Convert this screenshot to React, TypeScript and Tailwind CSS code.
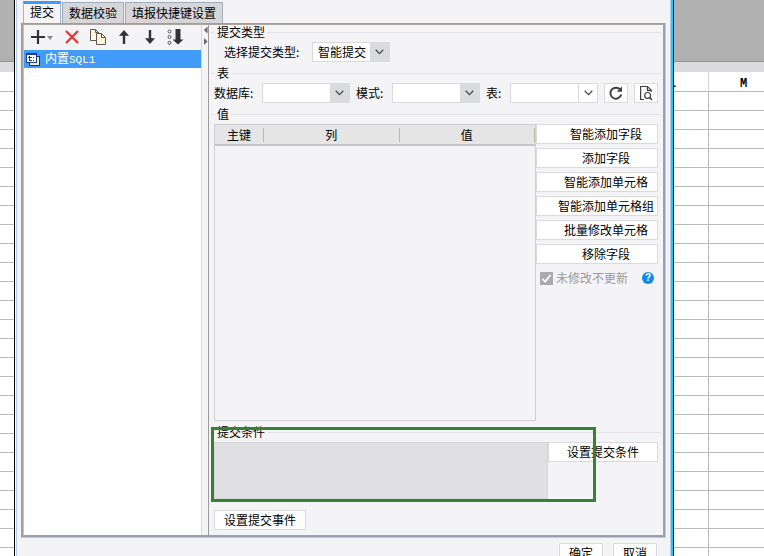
import { useState } from "react";
import type { ReactNode } from "react";
import clsx from "clsx";

const TABS = ["提交", "数据校验", "填报快捷键设置"];

const FIELD_ACTIONS = [
  "智能添加字段",
  "添加字段",
  "智能添加单元格",
  "智能添加单元格组",
  "批量修改单元格",
  "移除字段",
];

const SHEET_ROWS = Array.from({ length: 26 }, (_, i) => i);

function Sheet({ columns, className }: { columns: string[]; className: string }) {
  return (
    <div className={clsx("shrink-0 overflow-hidden bg-white", className)}>
      <div className="h-[61px] bg-[#b1b1b1]" />
      <div className="h-[11px] border-t border-[#929194] bg-[#dbdbde]" />
      <table className="w-full table-fixed border-separate border-spacing-0 font-['Liberation_Mono',monospace] text-[12px] leading-none">
        <thead>
          <tr>
            {columns.map((col, i) => (
              <th
                key={i}
                className={clsx(
                  "h-5 border-b border-[#bcbcbc] p-0 pt-1 font-bold",
                  i > 0 ? "text-center" : "w-[35px] text-left",
                  i < columns.length - 1 && "border-r border-r-[#d4d4d8]"
                )}
              >
                {i === 0 ? <span className="-ml-[5px]">{col}</span> : <span className="pl-[14px]">{col}</span>}
              </th>
            ))}
          </tr>
        </thead>
        <tbody>
          {SHEET_ROWS.map((row) => (
            <tr key={row}>
              {columns.map((_, i) => (
                <td
                  key={i}
                  className={clsx(
                    "h-[19px] border-b border-[#bcbcbc] p-0",
                    i < columns.length - 1 && "border-r"
                  )}
                />
              ))}
            </tr>
          ))}
        </tbody>
      </table>
    </div>
  );
}

function GroupTitle({ children }: { children: ReactNode }) {
  return (
    <div className="flex h-[14px] items-center gap-0.5 leading-[14px]">
      <span className="h-px w-1 bg-[#e4e4e8]" />
      <h2>{children}</h2>
      <span className="h-px flex-1 bg-[#e4e4e8]" />
    </div>
  );
}

function PushButton({ children, className, label }: { children: ReactNode; className?: string; label?: string }) {
  return (
    <button
      type="button"
      aria-label={label}
      className={clsx(
        "flex h-5 items-center justify-center border border-[#dadadd] bg-white leading-4 whitespace-nowrap",
        className
      )}
    >
      {children}
    </button>
  );
}

interface DropDownProps {
  id: string;
  options?: string[];
  className: string;
  plain?: boolean;
}

function DropDown({ id, options = [""], className, plain }: DropDownProps) {
  return (
    <div className={clsx("relative h-5 border border-[#dadadd] bg-white", className)}>
      <select id={id} className="block h-full w-full appearance-none bg-transparent pl-[5px] pr-5 leading-4 outline-none">
        {options.map((o) => (
          <option key={o}>{o}</option>
        ))}
      </select>
      <span
        className={clsx(
          "pointer-events-none absolute inset-y-0 right-0 flex w-[19px] items-center justify-center",
          plain ? "border-l border-[#dadadd]" : "bg-[#dadbdf]"
        )}
      >
        <svg width="9" height="6" viewBox="0 0 9 6" fill="none" stroke="#4a4b50" strokeWidth="1.3">
          <path d="M0.7 0.8 4.5 4.6 8.3 0.8" />
        </svg>
      </span>
    </div>
  );
}

function Toolbar() {
  return (
    <div className="flex h-[25px] items-center bg-[#f4f4f7] pb-[2px] pl-[6px]">
      <button type="button" aria-label="添加" className="w-[33px]">
        <svg width="24" height="16" viewBox="0 0 24 16">
          <path d="M8 1v14M1 8h14" stroke="#333" strokeWidth="2.2" />
          <path d="M17 7h6l-3 4z" fill="#88888c" />
        </svg>
      </button>
      <button type="button" aria-label="删除" className="w-[26px]">
        <svg width="18" height="16" viewBox="0 0 18 16">
          <path d="M3 2 15 14M15 2 3 14" stroke="#e33b35" strokeWidth="2.4" />
        </svg>
      </button>
      <button type="button" aria-label="复制" className="w-[28px]">
        <svg width="18" height="16" viewBox="0 0 18 16" stroke="#59564f" strokeWidth="1">
          <path d="M1.5 0.5h5l3 3v8h-8z" fill="#fff8e2" />
          <path d="M6.5 0.5v3h3" fill="none" />
          <path d="M7.5 4.5h5l4 4v7h-9z" fill="#fff5d8" />
          <path d="M12.5 4.5v4h4" fill="none" />
        </svg>
      </button>
      <button type="button" aria-label="上移" className="w-[26px]">
        <svg width="14" height="16" viewBox="0 0 14 16" fill="#333">
          <path d="M7 1 12 6.8H8.2V15H5.8V6.8H2z" />
        </svg>
      </button>
      <button type="button" aria-label="下移" className="w-[23px]">
        <svg width="14" height="16" viewBox="0 0 14 16" fill="#333">
          <path d="M7 15 2 9.2h3.8V1h2.4v8.2H12z" />
        </svg>
      </button>
      <button type="button" aria-label="排序">
        <svg width="18" height="16" viewBox="0 0 18 16">
          <g fill="none" stroke="#55565a">
            <circle cx="3.5" cy="2.5" r="1.5" />
            <circle cx="3.5" cy="8" r="1.5" />
            <circle cx="3.5" cy="13.8" r="1.5" />
          </g>
          <path d="M9.5 0h5v10.5h3l-5.5 5-5.5-5h3z" fill="#333" />
        </svg>
      </button>
    </div>
  );
}

function SubmitList() {
  return (
    <div className="flex w-[178px] shrink-0 flex-col border-r border-[#d8d8da] bg-white">
      <Toolbar />
      <ul>
        <li className="flex h-[18px] items-center gap-[5px] bg-[#419bf9] pl-[2px] text-white">
          <svg width="14" height="13" viewBox="0 0 14 13">
            <path d="M3 3h11v10H3z" fill="#16307c" />
            <path d="M11 4h2v8H4v-2h7z" fill="#e8f3c8" />
            <path d="M0 0h11v10H0z" fill="#1b3d98" />
            <path d="M1 2h9v7H1z" fill="#fff" />
            <path d="M2 4.5h4M3.5 3v5M3.5 7.5H6M7 4.5h1M7 7.5h1" stroke="#1b3d98" />
          </svg>
          <span className="leading-[18px]">
            内置<span className="font-['Liberation_Mono',monospace] text-[11px]">SQL1</span>
          </span>
        </li>
      </ul>
    </div>
  );
}

function Splitter() {
  return (
    <div className="flex w-[7px] shrink-0 flex-col border-r border-[#9b9b9d] bg-[#f4f4f7] pl-px pt-[1px]">
      <svg width="5" height="20" viewBox="0 0 5 20" fill="#66676b">
        <path d="M4.5 0.5v7L1 4z" />
        <path d="M1 12v7l3.5-3.5z" />
      </svg>
    </div>
  );
}

function FieldTable() {
  return (
    <div className="h-[297px] min-w-0 flex-1 border border-[#cfcfd2]">
      <table className="w-full table-fixed border-separate border-spacing-0">
        <thead>
          <tr className="bg-[#e5e5e5]">
            {["主键", "列", "值"].map((name, i) => (
              <th
                key={name}
                className={clsx(
                  "h-[21px] border-b-2 border-[#c6c6c8] p-0 font-normal",
                  i === 0 && "w-[49px]"
                )}
              >
                <div className="h-[14px] border-r border-[#b9b9ad] leading-[14px]">{name}</div>
              </th>
            ))}
          </tr>
        </thead>
        <tbody />
      </table>
    </div>
  );
}

function SubmitForm() {
  const [skipUnchanged, setSkipUnchanged] = useState(true);

  return (
    <form className="flex min-w-0 flex-1 flex-col gap-1 px-[2px] pb-[5px]">
      <section className="flex flex-col gap-[3px]">
        <GroupTitle>提交类型</GroupTitle>
        <div className="flex items-center pl-[13px]">
          <label htmlFor="submit-type" className="w-[88px]">
            选择提交类型:
          </label>
          <DropDown id="submit-type" options={["智能提交"]} className="w-[78px]" />
        </div>
      </section>

      <section className="flex flex-col gap-[3px]">
        <GroupTitle>表</GroupTitle>
        <div className="flex items-center gap-[6px] px-[3px]">
          <div className="flex items-center">
            <label htmlFor="database" className="w-12">
              数据库:
            </label>
            <DropDown id="database" className="w-[88px]" />
          </div>
          <div className="flex items-center">
            <label htmlFor="schema" className="w-9">
              模式:
            </label>
            <DropDown id="schema" className="w-[88px]" />
          </div>
          <div className="flex items-center">
            <label htmlFor="table" className="w-6">
              表:
            </label>
            <DropDown id="table" className="w-[88px]" plain />
          </div>
          <PushButton label="刷新" className="w-6">
            <svg width="14" height="14" viewBox="0 0 14 14" fill="none">
              <path d="M11.6 4.2A5.5 5.5 0 1 0 12.3 8.6" stroke="#3e3f43" strokeWidth="1.9" />
              <path d="M13 0.6v5.2H7.8z" fill="#3e3f43" />
            </svg>
          </PushButton>
          <PushButton label="预览" className="w-6">
            <svg width="14" height="16" viewBox="0 0 14 16" fill="none" stroke="#3e3f43" strokeWidth="1.2">
              <path d="M5 14.5H1.6V1.5H8.5L12.2 5.2V7" />
              <path d="M8.4 1.5v3.9h3.8" />
              <circle cx="8.6" cy="10.4" r="2.9" />
              <path d="M10.6 12.5 13 15" strokeWidth="1.6" />
            </svg>
          </PushButton>
        </div>
      </section>

      <section className="flex flex-col gap-[3px]">
        <GroupTitle>值</GroupTitle>
        <div className="flex px-[3px]">
          <FieldTable />
          <div className="flex w-[122px] shrink-0 flex-col gap-1">
            {FIELD_ACTIONS.map((name) => (
              <PushButton key={name} className="pl-[18px]">
                {name}
              </PushButton>
            ))}
            <div className="flex h-5 items-center justify-between px-1">
              <label className="flex items-center gap-[3px] text-[#98989b]">
                <span className="relative flex">
                  <input
                    type="checkbox"
                    checked={skipUnchanged}
                    disabled
                    onChange={(e) => setSkipUnchanged(e.target.checked)}
                    className="h-[13px] w-[13px] appearance-none bg-[#aaaaac]"
                  />
                  <svg
                    className="pointer-events-none absolute inset-0"
                    width="13"
                    height="13"
                    viewBox="0 0 13 13"
                    fill="none"
                    stroke="#fff"
                    strokeWidth="1.8"
                  >
                    <path d="M2.5 6.8 5.2 9.6 10.5 3" />
                  </svg>
                </span>
                未修改不更新
              </label>
              <button
                type="button"
                aria-label="帮助"
                className="flex h-3 w-3 items-center justify-center rounded-full bg-[#0d8bee] font-['Liberation_Sans',sans-serif] text-[10px] leading-3 font-bold text-white"
              >
                ?
              </button>
            </div>
          </div>
        </div>
      </section>

      <section className="relative flex flex-col gap-[3px] pb-[3px]">
        <GroupTitle>提交条件</GroupTitle>
        <div className="flex items-start px-[3px]">
          <textarea
            aria-label="提交条件"
            readOnly
            className="block h-[57px] min-w-0 flex-1 resize-none border border-[#d6d6d9] bg-[#e0e0e2] outline-none"
          />
          <PushButton className="w-[110px] shrink-0">设置提交条件</PushButton>
        </div>
        <div className="pointer-events-none absolute top-[2px] right-[65px] bottom-0 left-0 border-3 border-[#338333]" />
      </section>

      <div className="px-[3px] pt-1">
        <PushButton className="w-[92px]">设置提交事件</PushButton>
      </div>
    </form>
  );
}

export default function App() {
  const [activeTab, setActiveTab] = useState(TABS[0]);

  return (
    <div className="flex h-screen overflow-hidden font-['Noto_Sans_CJK_SC',sans-serif] text-[12px] leading-4 text-black">
      <Sheet columns={[""]} className="w-[14px]" />

      <main className="flex min-w-0 flex-1 border-x border-black">
        <div className="flex min-w-0 flex-1 border-r-2 border-[#22c8fa] bg-white pl-px">
          <div className="min-w-0 flex-1 border-x border-[#b4cdee] bg-[#f4f4f7] px-1">
            <nav className="flex h-[23px] items-end gap-px pl-[2px]" role="tablist">
              {TABS.map((tab) => (
                <button
                  key={tab}
                  type="button"
                  role="tab"
                  aria-selected={tab === activeTab}
                  onClick={() => setActiveTab(tab)}
                  className={clsx(
                    "border-x px-[6px] whitespace-nowrap",
                    tab === activeTab
                      ? "h-[22px] border-t-3 border-x-[#9fb3c9] border-t-[#3f9af7] bg-[#f4f4f7] pb-[3px]"
                      : "h-[21px] border-t border-[#9dabbd] bg-[#d5d5da]"
                  )}
                >
                  {tab}
                </button>
              ))}
            </nav>

            <div className="border border-[#8fa0ba] border-r-[#c3cad6] border-b-[#c3cad6]">
              <div className="border border-[#92a0b6] border-t-[#aba59c] border-l-[#9c9d9c]">
                <div className="flex border-r border-b border-l border-[#a3a29d] border-l-[#c4c3bd]">
                  <SubmitList />
                  <Splitter />
                  <SubmitForm />
                </div>
              </div>
            </div>

            <footer className="flex justify-end gap-[10px] pt-[5px] pr-[9px]">
              <PushButton className="w-11">确定</PushButton>
              <PushButton className="w-11">取消</PushButton>
            </footer>
          </div>
        </div>
      </main>

      <Sheet columns={["L", "M"]} className="w-[90px]" />
    </div>
  );
}
